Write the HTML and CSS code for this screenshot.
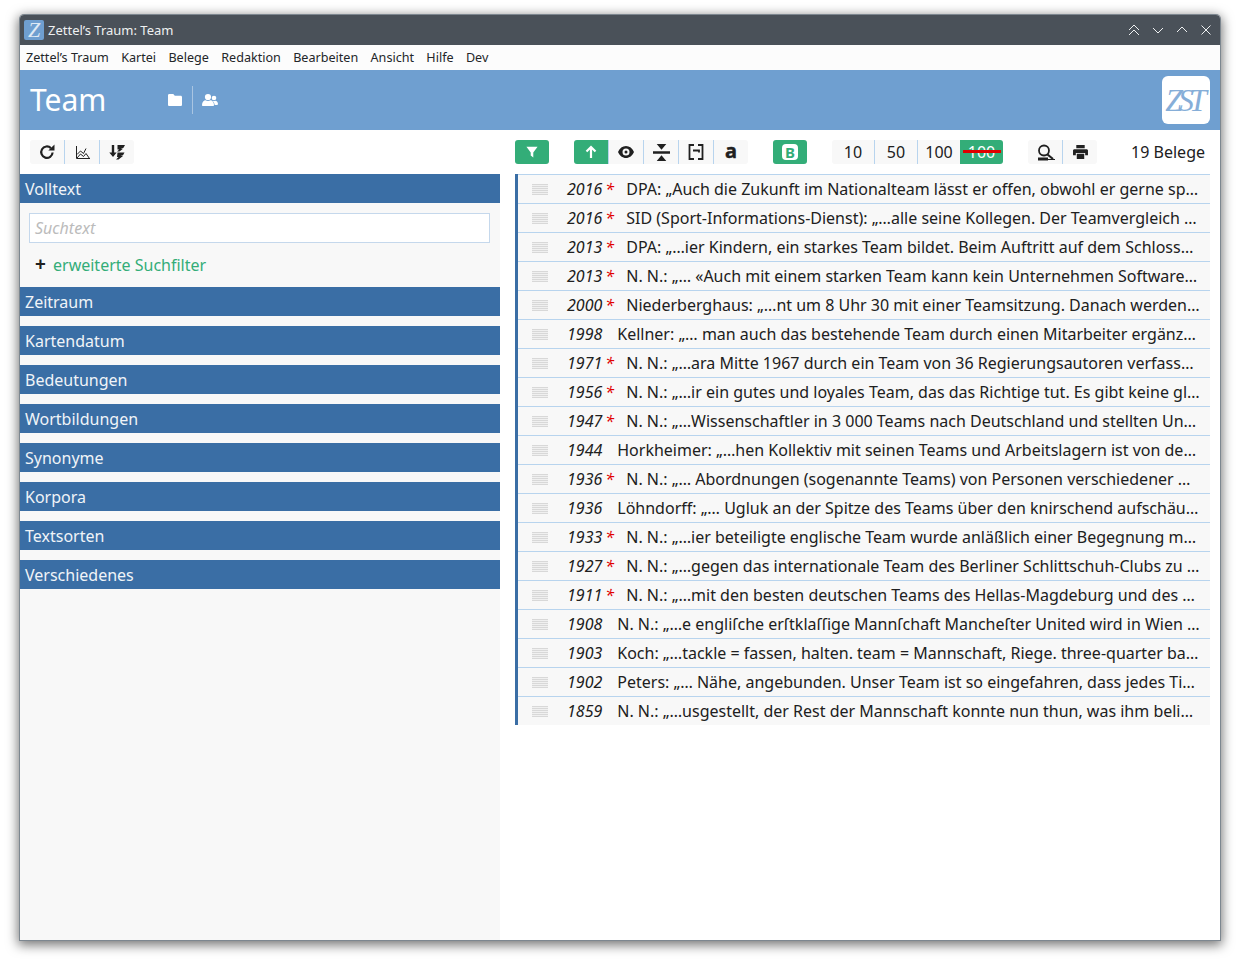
FILE: index.html
```html
<!DOCTYPE html>
<html>
  <head>
    <meta charset="utf-8">
    <title>Zettel's Traum: Team</title>
    <link rel="stylesheet" href="styles.css">
  </head>
  <body>
    <div class="window">
      <div class="titlebar">
        <span class="app-icon">Z</span>
        <span class="title">Zettel’s Traum: Team</span>
        <span class="win-buttons">
          <svg viewBox="0 0 14 14"><path d="M2 7l5-5 5 5M2 12l5-5 5 5"/></svg>
          <svg viewBox="0 0 14 14"><path d="M2 5l5 5 5-5"/></svg>
          <svg viewBox="0 0 14 14"><path d="M2 9l5-5 5 5"/></svg>
          <svg viewBox="0 0 14 14"><path d="M2.500 2.500l9 9M11.500 2.500l-9 9"/></svg>
        </span>
      </div>

      <nav class="menubar">
        <span>Zettel’s Traum</span>
        <span>Kartei</span>
        <span>Belege</span>
        <span>Redaktion</span>
        <span>Bearbeiten</span>
        <span>Ansicht</span>
        <span>Hilfe</span>
        <span>Dev</span>
      </nav>

      <header class="header">
        <h1>Team</h1>
        <div class="header-icons">
          <span class="header-icon">
            <svg viewBox="0 0 14 14" width="14" height="14"><path d="M1.300 1h4l1.500 1.800h5.900c.7 0 1.300.6 1.300 1.300v7.600c0 .7-.6 1.300-1.300 1.300H1.300C.6 13 0 12.400 0 11.700V2.300C0 1.600.6 1 1.300 1z"/></svg>
          </span>
          <span class="header-icon">
            <svg viewBox="0 0 16 14" width="16" height="14"><circle cx="6" cy="4" r="3.100"/><circle cx="12" cy="5" r="2.300"/><path d="M0 12c0-3 2-4.700 3.500-4.700.8.400 1.600.6 2.500.6s1.700-.2 2.500-.6C10 7.300 12 9 12 12c0 .6-.4 1-1 1H1c-.6 0-1-.4-1-1z"/><path d="M10.300 7.800c.5.200 1.100.3 1.700.3.500 0 .9-.1 1.300-.3 1.500 0 2.700 1.500 2.700 3.200 0 .5-.4.900-.9.900h-2.400c-.2-1.600-1.100-3.200-2.400-4.100z"/></svg>
          </span>
        </div>
        <div class="logo"><span>ZST</span></div>
      </header>

      <div class="content">
        <aside class="left">
          <div class="toolbar">
            <div class="btn-group">
              <button class="tbtn">
                <svg viewBox="0 0 16 16" width="16" height="16"><path class="stroke" d="M13.600 8.500a5.700 5.700 0 1 1-1.700-4.400"/><path d="M9.300 6.600H15.500V.4z"/></svg>
              </button>
              <button class="tbtn">
                <svg viewBox="0 0 15 15" width="15" height="15"><path class="thin" d="M1.500 1v12.500H15M2 9.500l3.500-3.500 3 2.500L11 3.500M2 13l3.500-4 3 2.500 2.500-3 3.500 5"/></svg>
              </button>
              <button class="tbtn">
                <svg viewBox="0 0 16 16" width="16" height="16"><path d="M2.800 1h2.400v7.500h2.500L4 13 .3 8.500h2.500z"/><path d="M8.500 1H16l-1.500 2.800-2.800.9H14L10.500 7.500H8l2.200-2H8.500zM8.500 8.500H15.500L14 11.200l-2.500.8H14L9.500 15.500H7l2.500-2.500H8z"/></svg>
              </button>
            </div>
          </div>
          <div class="sidebar">
            <div class="panel-head">Volltext</div>
            <div class="panel-body">
              <div class="search-input">Suchtext</div>
              <div class="more-filter"><span class="plus">+</span><span class="more-link">erweiterte Suchfilter</span></div>
            </div>
            <div class="panel-head">Zeitraum</div>
            <div class="panel-head">Kartendatum</div>
            <div class="panel-head">Bedeutungen</div>
            <div class="panel-head">Wortbildungen</div>
            <div class="panel-head">Synonyme</div>
            <div class="panel-head">Korpora</div>
            <div class="panel-head">Textsorten</div>
            <div class="panel-head">Verschiedenes</div>
          </div>
        </aside>

        <main class="main">
          <div class="toolbar main-toolbar">
            <div class="btn-group">
              <button class="tbtn active">
                <svg viewBox="0 0 14 14" width="12" height="12"><path d="M.5 1h13L8.500 7.500V13.500l-3-2.500V7.500z"/></svg>
              </button>
            </div>
            <div class="btn-group">
              <button class="tbtn active">
                <svg viewBox="0 0 14 14" width="14" height="14"><path class="stroke" d="M7 13V2M2.500 6.500L7 2l4.500 4.500"/></svg>
              </button>
              <button class="tbtn">
                <svg viewBox="0 0 16 12" width="16" height="12"><path fill-rule="evenodd" d="M8 0c3.500 0 6.400 2.300 8 6-1.600 3.700-4.500 6-8 6s-6.400-2.300-8-6c1.600-3.700 4.500-6 8-6zm0 2.500a3.500 3.500 0 1 0 0 7 3.500 3.500 0 0 0 0-7zM8 4.500a1.500 1.500 0 1 1 0 3 1.500 1.500 0 0 1 0-3z"/></svg>
              </button>
              <button class="tbtn">
                <svg viewBox="0 0 16 16" width="17" height="17"><path d="M0 6.800h16v2.400H0zM3.500 0h9L8 5.500zM3.500 16h9L8 10.500z"/></svg>
              </button>
              <button class="tbtn">
                <svg viewBox="0 0 16 16" width="16" height="16"><path class="stroke2" d="M6 1h-4.500v14H6M10 1h4.500v14H10M5 6.500h6v2"/></svg>
              </button>
              <button class="tbtn letter">a</button>
            </div>
            <div class="btn-group">
              <button class="tbtn active"><span class="bold-b">B</span></button>
            </div>
            <div class="btn-group counts">
              <button class="tbtn count">10</button>
              <button class="tbtn count">50</button>
              <button class="tbtn count">100</button>
              <button class="tbtn count active struck">100</button>
            </div>
            <div class="btn-group">
              <button class="tbtn">
                <svg viewBox="0 0 19 17" width="19" height="17"><circle class="stroke2" cx="8" cy="6.500" r="5"/><path class="stroke" d="M11.500 10.500l5.500 4.500"/><path d="M2 13.500h10v3H2z"/><path class="thin" d="M12 15.500h7"/></svg>
              </button>
              <button class="tbtn">
                <svg viewBox="0 0 16 15" width="15" height="14"><path d="M3.500 0h9v3.500h-9zM1.500 4.500h13c.8 0 1.500.7 1.500 1.500v5h-3V8.500H3V11H0V6c0-.8.7-1.500 1.500-1.500zM4 9.500h8V15H4z"/></svg>
              </button>
            </div>
            <div class="hit-count">19 Belege</div>
          </div>

          <div class="results">
            <div class="row"><span class="handle"></span><i class="year">2016<b class="star">*</b></i><span class="text">DPA: „Auch die Zukunft im Nationalteam lässt er offen, obwohl er gerne sp…</span></div>
            <div class="row"><span class="handle"></span><i class="year">2016<b class="star">*</b></i><span class="text">SID (Sport-Informations-Dienst): „…alle seine Kollegen. Der Teamvergleich …</span></div>
            <div class="row"><span class="handle"></span><i class="year">2013<b class="star">*</b></i><span class="text">DPA: „…ier Kindern, ein starkes Team bildet. Beim Auftritt auf dem Schloss…</span></div>
            <div class="row"><span class="handle"></span><i class="year">2013<b class="star">*</b></i><span class="text">N. N.: „… «Auch mit einem starken Team kann kein Unternehmen Software…</span></div>
            <div class="row"><span class="handle"></span><i class="year">2000<b class="star">*</b></i><span class="text">Niederberghaus: „…nt um 8 Uhr 30 mit einer Teamsitzung. Danach werden…</span></div>
            <div class="row"><span class="handle"></span><i class="year">1998</i><span class="text">Kellner: „… man auch das bestehende Team durch einen Mitarbeiter ergänz…</span></div>
            <div class="row"><span class="handle"></span><i class="year">1971<b class="star">*</b></i><span class="text">N. N.: „…ara Mitte 1967 durch ein Team von 36 Regierungsautoren verfass…</span></div>
            <div class="row"><span class="handle"></span><i class="year">1956<b class="star">*</b></i><span class="text">N. N.: „…ir ein gutes und loyales Team, das das Richtige tut. Es gibt keine gl…</span></div>
            <div class="row"><span class="handle"></span><i class="year">1947<b class="star">*</b></i><span class="text">N. N.: „…Wissenschaftler in 3 000 Teams nach Deutschland und stellten Un…</span></div>
            <div class="row"><span class="handle"></span><i class="year">1944</i><span class="text">Horkheimer: „…hen Kollektiv mit seinen Teams und Arbeitslagern ist von de…</span></div>
            <div class="row"><span class="handle"></span><i class="year">1936<b class="star">*</b></i><span class="text">N. N.: „… Abordnungen (sogenannte Teams) von Personen verschiedener …</span></div>
            <div class="row"><span class="handle"></span><i class="year">1936</i><span class="text">Löhndorff: „… Ugluk an der Spitze des Teams über den knirschend aufschäu…</span></div>
            <div class="row"><span class="handle"></span><i class="year">1933<b class="star">*</b></i><span class="text">N. N.: „…ier beteiligte englische Team wurde anläßlich einer Begegnung m…</span></div>
            <div class="row"><span class="handle"></span><i class="year">1927<b class="star">*</b></i><span class="text">N. N.: „…gegen das internationale Team des Berliner Schlittschuh-Clubs zu …</span></div>
            <div class="row"><span class="handle"></span><i class="year">1911<b class="star">*</b></i><span class="text">N. N.: „…mit den besten deutschen Teams des Hellas-Magdeburg und des …</span></div>
            <div class="row"><span class="handle"></span><i class="year">1908</i><span class="text">N. N.: „…e engliſche erſtklaſſige Mannſchaft Mancheſter United wird in Wien …</span></div>
            <div class="row"><span class="handle"></span><i class="year">1903</i><span class="text">Koch: „…tackle = fassen, halten. team = Mannschaft, Riege. three-quarter ba…</span></div>
            <div class="row"><span class="handle"></span><i class="year">1902</i><span class="text">Peters: „… Nähe, angebunden. Unser Team ist so eingefahren, dass jedes Ti…</span></div>
            <div class="row"><span class="handle"></span><i class="year">1859</i><span class="text">N. N.: „…usgestellt, der Rest der Mannschaft konnte nun thun, was ihm beli…</span></div>
          </div>
        </main>
      </div>
    </div>
  </body>
</html>
```

FILE: styles.css
```css
html, body { height: 100%; }
body { margin: 0; padding: 15px 20px 24px; box-sizing: border-box; background: #fff; font-family: "Noto Sans", sans-serif; font-size: 16px; color: #202020; }
button { font: inherit; color: inherit; border: 0; padding: 0; margin: 0; background: none; }
svg { display: block; fill: currentColor; }

.window { width: 1200px; height: 925px; display: flex; flex-direction: column; background: #fff; border-radius: 4px 4px 0 0; box-shadow: 0 0 0 1px #7d8790, 0 3px 12px 2px rgba(0,0,0,0.55); overflow: hidden; }

.titlebar { height: 30px; flex: none; display: flex; align-items: center; background: #4a5159; color: #eef0f1; font-size: 13px; padding: 0 7px 0 4px; box-sizing: border-box; }
.app-icon { width: 20px; height: 20px; flex: none; margin-right: 4px; border-radius: 2px; background: #6f9fd0; color: #dfeaf5; font: italic 22px/20px "Liberation Serif", serif; text-align: center; }
.win-buttons { margin-left: auto; display: flex; gap: 10px; }
.win-buttons svg { width: 14px; height: 14px; fill: none; stroke: #eef0f1; stroke-width: 1; }

.menubar { height: 25px; flex: none; display: flex; align-items: center; gap: 12.3px; padding: 0 6px 1px; box-sizing: border-box; background: #fcfcfc; font-size: 12.6px; color: #232629; }

.header { height: 60px; flex: none; display: flex; align-items: center; background: #6f9fd0; color: #fff; padding: 0 10px; box-sizing: border-box; }
.header h1 { margin: 0 0 2px; width: 138px; font-size: 30px; font-weight: 400; }
.header-icons { display: flex; height: 28px; }
.header-icon { display: flex; align-items: center; padding: 0 9px; }
.header-icon:first-child { padding: 0 10px 0 0; border-right: 1px solid #a9c5e2; }
.logo { margin-left: auto; width: 48px; height: 48px; border-radius: 6px; background: #fff; color: #86aed8; display: flex; align-items: center; justify-content: center; font: italic 32px/48px "Liberation Serif", serif; letter-spacing: -5px; padding-right: 5px; box-sizing: border-box; }

.content { flex: 1; display: flex; min-height: 0; }
.left { width: 480px; flex: none; display: flex; flex-direction: column; }
.main { flex: 1; padding: 0 10px 0 15px; min-width: 0; }

.toolbar { height: 44px; flex: none; box-sizing: border-box; padding: 10px 0; display: flex; }
.left .toolbar { padding-left: 10px; }
.main-toolbar { gap: 25px; }
.btn-group { display: flex; height: 24px; border-radius: 3px; background: #f8f8f8; }
.tbtn { width: 35px; height: 24px; display: flex; align-items: center; justify-content: center; color: #202020; border-left: 1px solid #b8d4ee; box-sizing: border-box; }
.tbtn:first-child { width: 34px; border-left: 0; border-radius: 3px 0 0 3px; }
.tbtn:last-child { border-radius: 0 3px 3px 0; }
.tbtn:only-child { border-radius: 3px; }
.tbtn.active { background: #33ad78; color: #fff; border-left: 0; }
.stroke { fill: none; stroke: currentColor; stroke-width: 2.200; }
.stroke2 { fill: none; stroke: currentColor; stroke-width: 1.800; }
.thin { fill: none; stroke: currentColor; stroke-width: 1; }
.letter { font-weight: 700; font-size: 20px; line-height: 22px; padding-bottom: 2px; -webkit-text-stroke: 0.4px #202020; }
.bold-b { width: 16px; height: 16px; border-radius: 4px; background: #fff; color: #33ad78; font-weight: 700; font-size: 15px; line-height: 16px; text-align: center; }
.count { width: 43px; }
.count:first-child { width: 42px; }
.struck { position: relative; }
.struck::after { content: ""; position: absolute; left: 3px; right: 2px; top: 10px; height: 3px; background: #e00000; }
.hit-count { margin-left: auto; margin-right: 5px; line-height: 24px; }

.sidebar { flex: 1; background: #f8f8f8; }
.panel-head { height: 29px; margin-bottom: 10px; padding: 1px 0 0 5px; box-sizing: border-box; background: #3a6ea5; color: #f0f4f8; line-height: 28px; }
.panel-body { margin-top: -10px; height: 84px; padding: 10px 10px 0 9px; box-sizing: border-box; }
.search-input { height: 30px; box-sizing: border-box; padding-left: 5px; border: 1px solid #c5d8ec; background: #fff; color: #bbb; font-style: italic; line-height: 28px; }
.more-filter { margin-top: 7px; padding-left: 6px; display: flex; align-items: center; height: 29px; }
.plus { width: 18px; font-size: 19px; font-weight: 700; color: #202020; line-height: 20px; padding-bottom: 2px; }
.more-link { color: #33ad78; }

.results { border-left: 3px solid #3a6ea5; }
.row { height: 29px; box-sizing: border-box; display: flex; align-items: center; border-top: 1px solid #b8d4ee; background: #f8f8f8; white-space: nowrap; overflow: hidden; }
.handle { width: 16px; height: 11px; margin: 0 19px 0 14px; flex: none; background: repeating-linear-gradient(#d8d8d8 0, #d8d8d8 1px, #f0f0f0 1px, #f0f0f0 2px); }
.year { flex: none; margin-right: 15px; }
.star { display: inline-block; width: 9px; box-sizing: border-box; padding-left: 3px; color: #e00000; font-weight: 400; overflow: visible; }
.text { flex: 1; min-width: 0; overflow: hidden; }
```
